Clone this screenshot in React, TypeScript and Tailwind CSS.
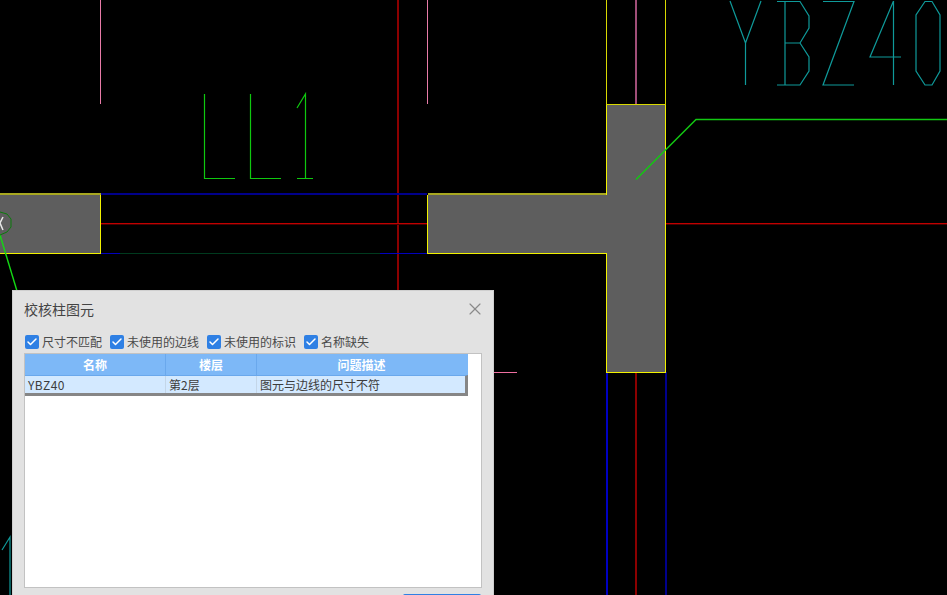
import { Check, X } from 'lucide-react';

const filters = ['尺寸不匹配', '未使用的边线', '未使用的标识', '名称缺失'];

function Drawing() {
  return (
    <svg width="947" height="595" viewBox="0 0 947 595" className="block" shapeRendering="crispEdges">
      {/* walls */}
      <path d="M0 194H100.5V253.5H0Z" fill="#5e5e5e" />
      <path d="M427.5 194H606.5V104.5H665.5V372.5H606.5V253.5H427.5Z" fill="#5e5e5e" />

      {/* axis lines */}
      <path d="M398 0V595" stroke="#8b0000" strokeWidth="2" fill="none" />
      <path d="M100 224.5H427M665 224.5H947" stroke="#4a0000" fill="none" />
      <path d="M100 223.5H427M665 223.5H947" stroke="#c00000" fill="none" />
      <path d="M100 194H427" stroke="#00008b" strokeWidth="2" fill="none" />
      <path d="M100 253.5H120M380 253.5H427" stroke="#0000c0" fill="none" />
      <path d="M120 253.5H380" stroke="#003a1e" fill="none" />
      <path d="M607 372V595" stroke="#0000c0" strokeWidth="2" fill="none" />
      <path d="M666 372V595" stroke="#00008b" strokeWidth="2" fill="none" />
      <path d="M636 372V595" stroke="#8b0000" strokeWidth="2" fill="none" />

      {/* pink lines */}
      <path d="M100.5 0V104M427.5 0V104" stroke="#e87ba8" fill="none" />
      <path d="M636 0V104" stroke="#a04e78" strokeWidth="2" fill="none" />
      <path d="M494 372.5H517" stroke="#ee6fa0" fill="none" />

      {/* yellow outlines */}
      <path d="M606.5 0V104.5M665.5 0V104.5" stroke="#d8d800" fill="none" />
      <path d="M606.5 104.5H665.5" stroke="#d8d800" fill="none" />
      <path d="M0 194H100.5M427.5 194H606.5" stroke="#a8a820" strokeWidth="2" fill="none" />
      <path d="M100.5 194.5V253.5H0M427.5 194.5V253.5H606.5V372.5H665.5V104.5M606.5 104.5V194.5" stroke="#f2f200" fill="none" />

      <g shapeRendering="auto">
        {/* leaders */}
        <path d="M947 119.5H696L636 179.5" stroke="#12c812" strokeWidth="1.5" fill="none" />
        <path d="M0 235L17 291" stroke="#14d814" strokeWidth="1.4" fill="none" />
        <path d="M0 212L7 214L11 219L11 227L7 232L0 235" stroke="#0c7a0c" fill="none" />
        <path d="M3 217L0 223L3 230" stroke="#e8e8e8" strokeWidth="1.5" fill="none" />

        {/* LL1 */}
        <path d="M204.5 94V178.5H235M250.5 94V178.5H281M297 108L305.5 94V178.5M297 178.5H313" stroke="#0fc80f" strokeWidth="1.2" fill="none" />

        {/* YBZ40 */}
        <path
          d="M730 1L745.5 43L761 1M745.5 43V85M777 1.5H800L809 16V28L800 43H785M800 43L809 57V71L800 85H777M785 1V85M823 1.5H854L823 85H854M893.5 1L870 57H901M893.5 1V85M925 1.5H932L940 15V71L932 85H925L916 71V15Z"
          stroke="#0f9a9a"
          strokeWidth="1.2"
          fill="none"
        />
        <path d="M2 550L10 537V595" stroke="#0f9a9a" strokeWidth="1.2" fill="none" />
      </g>
    </svg>
  );
}

export default function App() {
  return (
    <div
      className="relative h-[595px] w-[947px] overflow-hidden bg-black"
      style={{ fontFamily: '"Noto Sans CJK SC", "Liberation Sans", sans-serif' }}
    >
      <Drawing />

      <div className="absolute left-[12px] top-[290px] h-[320px] w-[482px] border border-[#cfcfcf] bg-[#e2e2e2]">
        <div className="flex h-[39px] items-center justify-between pb-[4px] pl-[11px] pr-[8px]">
          <span className="text-[14px] leading-none text-[#444444]">校核柱图元</span>
          <X size={20} strokeWidth={1.4} className="text-[#8a8a8a]" />
        </div>

        <div className="flex h-[23px] items-center gap-[8px] pl-[12px]">
          {filters.map((name) => (
            <label key={name} className="flex items-center gap-[3px] text-[12px] leading-none text-[#4a4a4a]">
              <span className="flex h-[14px] w-[14px] items-center justify-center rounded-[2px] bg-[#2f80e4]">
                <Check size={12} strokeWidth={3} className="text-white" />
              </span>
              {name}
            </label>
          ))}
        </div>

        <div className="ml-[11px] h-[235px] w-[458px] border border-[#c2c2c2] bg-white">
          <div className="w-[443px]">
            <div className="flex h-[21px] items-center bg-[#7db8f7] text-center text-[12px] font-bold leading-none text-white">
              <div className="flex h-full w-[141px] items-center justify-center border-r border-[#6aa8ec]">名称</div>
              <div className="flex h-full w-[91px] items-center justify-center border-r border-[#6aa8ec]">楼层</div>
              <div className="flex-1 pr-[2px]">问题描述</div>
            </div>
            <div className="flex h-[21px] items-center border-b-[3px] border-r-[3px] border-t border-[#868686] border-t-[#6aa8ec] bg-[#d3e9ff] text-[12px] leading-none text-[#3c3c3c]">
              <div className="flex h-full w-[141px] items-center border-r border-[#c4d6e8] pl-[3px] tracking-[0.4px]">YBZ40</div>
              <div className="flex h-full w-[91px] items-center border-r border-[#c4d6e8] pl-[3px]">第2层</div>
              <div className="flex-1 pl-[3px]">图元与边线的尺寸不符</div>
            </div>
          </div>
        </div>

        <div className="ml-[390px] mt-[6px] h-[24px] w-[78px] rounded-[2px] bg-[#2f80e4]" />
      </div>
    </div>
  );
}
